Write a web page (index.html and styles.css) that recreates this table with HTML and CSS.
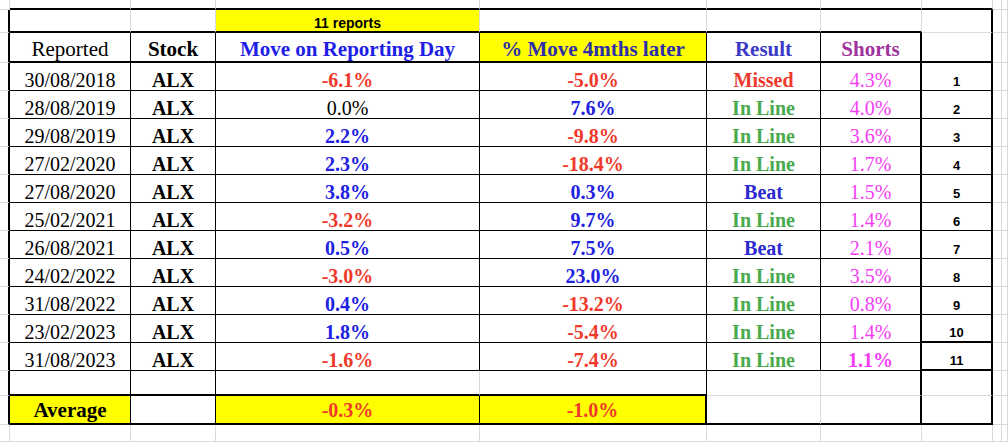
FILE: index.html
```html
<!DOCTYPE html>
<html lang="en">
<head>
<meta charset="utf-8">
<title>ALX reports</title>
<link rel="stylesheet" href="styles.css">
</head>
<body>
<table class="sheet">
<colgroup>
<col class="w0"><col class="w1"><col class="w2"><col class="w3"><col class="w4"><col class="w5"><col class="w6"><col class="w7"><col class="w8"><col class="w9">
</colgroup>
<tbody>
<tr class="r-top"><td></td><td class="BB"></td><td class="BB"></td><td class="BB"></td><td class="BB"></td><td class="BB"></td><td class="BB"></td><td class="BB"></td><td></td><td></td></tr>
<tr class="r-banner"><td class="BR"></td><td class="BB"></td><td class="BB"></td><td class="BB hl banner">11 reports</td><td class="BB"></td><td class="BB"></td><td class="BB"></td><td class="BR"></td><td></td><td></td></tr>
<tr class="r-head"><td class="BR"></td><td class="BB bR head plain">Reported</td><td class="BB bR head">Stock</td><td class="BB bR head h-move">Move on Reporting Day</td><td class="BB bR head hl h-later">% Move 4mths later</td><td class="BB bR head h-result">Result</td><td class="BB BR head h-shorts">Shorts</td><td class="BB BR"></td><td></td><td></td></tr>
<tr class="r-data"><td class="BR"></td><td class="bB bR">30/08/2018</td><td class="bB bR b">ALX</td><td class="bB bR b dn">-6.1%</td><td class="bB bR b dn">-5.0%</td><td class="bB bR b dn">Missed</td><td class="bB BR sh">4.3%</td><td class="bB BR idx">1</td><td></td><td></td></tr>
<tr class="r-data"><td class="BR"></td><td class="bB bR">28/08/2019</td><td class="bB bR b">ALX</td><td class="bB bR">0.0%</td><td class="bB bR b up">7.6%</td><td class="bB bR b il">In Line</td><td class="bB BR sh">4.0%</td><td class="bB BR idx">2</td><td></td><td></td></tr>
<tr class="r-data"><td class="BR"></td><td class="bB bR">29/08/2019</td><td class="bB bR b">ALX</td><td class="bB bR b up">2.2%</td><td class="bB bR b dn">-9.8%</td><td class="bB bR b il">In Line</td><td class="bB BR sh">3.6%</td><td class="bB BR idx">3</td><td></td><td></td></tr>
<tr class="r-data"><td class="BR"></td><td class="bB bR">27/02/2020</td><td class="bB bR b">ALX</td><td class="bB bR b up">2.3%</td><td class="bB bR b dn">-18.4%</td><td class="bB bR b il">In Line</td><td class="bB BR sh">1.7%</td><td class="bB BR idx">4</td><td></td><td></td></tr>
<tr class="r-data"><td class="BR"></td><td class="bB bR">27/08/2020</td><td class="bB bR b">ALX</td><td class="bB bR b up">3.8%</td><td class="bB bR b up">0.3%</td><td class="bB bR b bt">Beat</td><td class="bB BR sh">1.5%</td><td class="bB BR idx">5</td><td></td><td></td></tr>
<tr class="r-data"><td class="BR"></td><td class="bB bR">25/02/2021</td><td class="bB bR b">ALX</td><td class="bB bR b dn">-3.2%</td><td class="bB bR b up">9.7%</td><td class="bB bR b il">In Line</td><td class="bB BR sh">1.4%</td><td class="bB BR idx">6</td><td></td><td></td></tr>
<tr class="r-data"><td class="BR"></td><td class="bB bR">26/08/2021</td><td class="bB bR b">ALX</td><td class="bB bR b up">0.5%</td><td class="bB bR b up">7.5%</td><td class="bB bR b bt">Beat</td><td class="bB BR sh">2.1%</td><td class="bB BR idx">7</td><td></td><td></td></tr>
<tr class="r-data"><td class="BR"></td><td class="bB bR">24/02/2022</td><td class="bB bR b">ALX</td><td class="bB bR b dn">-3.0%</td><td class="bB bR b up">23.0%</td><td class="bB bR b il">In Line</td><td class="bB BR sh">3.5%</td><td class="bB BR idx">8</td><td></td><td></td></tr>
<tr class="r-data"><td class="BR"></td><td class="bB bR">31/08/2022</td><td class="bB bR b">ALX</td><td class="bB bR b up">0.4%</td><td class="bB bR b dn">-13.2%</td><td class="bB bR b il">In Line</td><td class="bB BR sh">0.8%</td><td class="bB BR idx">9</td><td></td><td></td></tr>
<tr class="r-data"><td class="BR"></td><td class="bB bR">23/02/2023</td><td class="bB bR b">ALX</td><td class="bB bR b up">1.8%</td><td class="bB bR b dn">-5.4%</td><td class="bB bR b il">In Line</td><td class="bB BR sh">1.4%</td><td class="BB BR idx">10</td><td></td><td></td></tr>
<tr class="r-data"><td class="BR"></td><td class="bB bR">31/08/2023</td><td class="bB bR b">ALX</td><td class="bB bR b dn">-1.6%</td><td class="bB bR b dn">-7.4%</td><td class="bB bR b il">In Line</td><td class="bB BR sh b">1.1%</td><td class="BB BR idx">11</td><td></td><td></td></tr>
<tr class="r-blank"><td class="BR"></td><td class="BB bR"></td><td class="BB bR"></td><td class="BB"></td><td class="BB bR"></td><td></td><td class="BR"></td><td class="BR"></td><td></td><td></td></tr>
<tr class="r-avg"><td class="BR"></td><td class="BB bR hl head avg">Average</td><td class="BB bR"></td><td class="BB bR hl b dn avg">-0.3%</td><td class="BB BR hl b dn avg">-1.0%</td><td class="BB"></td><td class="BB BR"></td><td class="BB BR"></td><td></td><td></td></tr>
<tr class="r-bottom"><td></td><td></td><td></td><td></td><td></td><td></td><td></td><td></td><td></td><td></td></tr>
</tbody>
</table>
</body>
</html>
```

FILE: styles.css
```css
html, body {
  margin: 0;
  padding: 0;
  background: #ffffff;
  overflow: hidden;
}

.sheet {
  border-collapse: separate;
  border-spacing: 0;
  table-layout: fixed;
  width: 1008px;
  font-family: "Liberation Serif", "Times New Roman", serif;
  color: #000;
}

.w0 { width: 10px; }
.w1 { width: 121px; }
.w2 { width: 85px; }
.w3 { width: 264px; }
.w4 { width: 227px; }
.w5 { width: 114px; }
.w6 { width: 101px; }
.w7 { width: 71px; }
.w8 { width: 9px; }
.w9 { width: 6px; }

.r-top { height: 10px; }
.r-banner { height: 23px; }
.r-head { height: 30px; }
.r-data { height: 28px; }
.r-blank { height: 25px; }
.r-avg { height: 29px; }
.r-bottom { height: 17px; }

.sheet td {
  padding: 0;
  border-right: 1px solid #dadada;
  border-bottom: 1px solid #dadada;
  text-align: center;
  vertical-align: bottom;
  font-size: 20px;
  line-height: 20px;
  white-space: nowrap;
  overflow: hidden;
}

.sheet .bR { border-right: 1px solid #000; }
.sheet .BR { border-right: 2px solid #000; }
.sheet .bB { border-bottom: 1px solid #000; }
.sheet .BB { border-bottom: 2px solid #000; }

.sheet .hl { background: #ffff00; }

.sheet .banner {
  font-family: "Liberation Sans", Arial, sans-serif;
  font-weight: bold;
  font-size: 14px;
  line-height: 16px;
}

.sheet .head {
  font-size: 21px;
  line-height: 24px;
  font-weight: bold;
}
.sheet .plain { font-weight: normal; }
.sheet .h-move { color: #1e1ee6; }
.sheet .h-later { color: #2e2eaa; }
.sheet .h-result { color: #3a3ac6; }
.sheet .h-shorts { color: #a0329c; }

.sheet .b { font-weight: bold; }
.sheet .up { color: #2121e2; }
.sheet .dn { color: #f0392b; }
.sheet .il { color: #4aab4c; }
.sheet .bt { color: #2a2ad0; }
.sheet .sh { color: #f43ef4; }

.sheet .idx {
  font-family: "Liberation Sans", Arial, sans-serif;
  font-weight: bold;
  font-size: 13px;
  line-height: 15px;
  padding-bottom: 1px;
}

.sheet .avg {
  line-height: 22px;
  padding-bottom: 2px;
}
```
